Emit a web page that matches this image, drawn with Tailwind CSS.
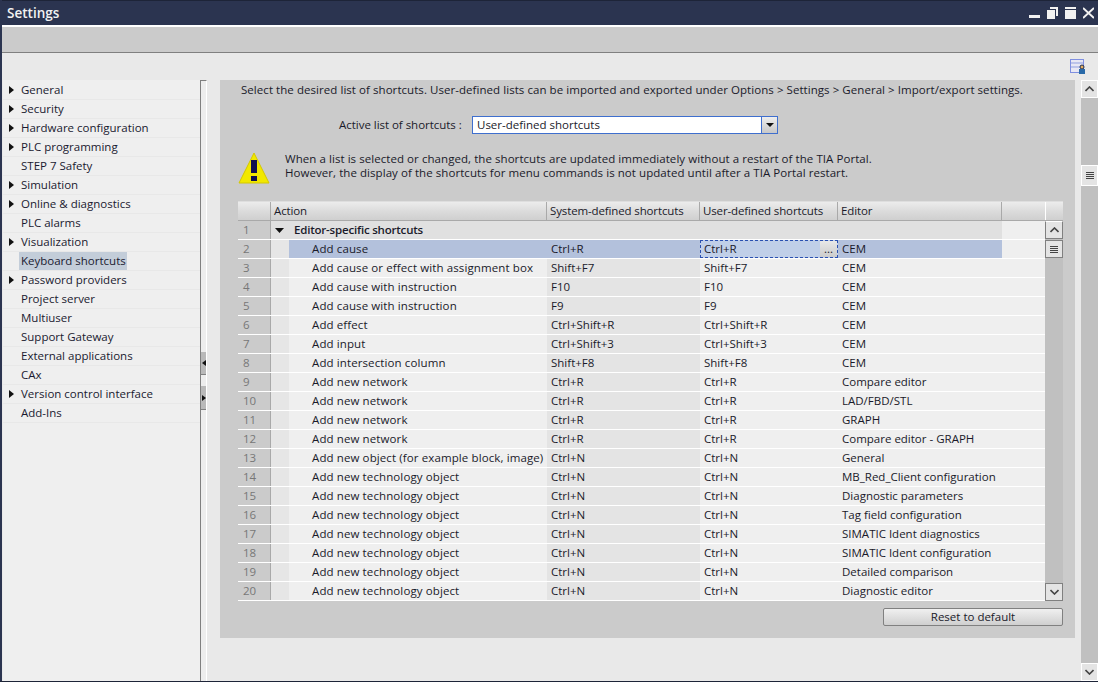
<!DOCTYPE html>
<html lang="en">
<head>
<meta charset="UTF-8">
<title>Settings</title>
<script src="https://cdn.jsdelivr.net/npm/@tailwindcss/browser@4"></script>
</head>
<body class="w-[1098px] h-[682px] overflow-hidden bg-[#e9e9e9] font-['Open_Sans',sans-serif] text-[11.5px] text-[#1a1a2a]">
<div class="h-[681px] flex flex-col border-l-2 border-[#2b3450]">
  <!-- title bar -->
  <div class="h-[25px] bg-[#2b3450] flex items-center justify-between border-t border-[#1d2438]">
    <span class="pl-[5px] text-[13.5px] font-semibold text-[#f2f2f2]">Settings</span>
    <div class="flex items-center gap-[7px] pr-[4px]">
      <svg width="11" height="12" viewBox="0 0 11 12"><rect y="8" width="11" height="3" fill="#f2f2f2"/></svg>
      <svg width="11" height="12" viewBox="0 0 11 12" fill="#f2f2f2"><path d="M0 3h8v9H0z"/><path d="M3 0h8v9H9V2H3z"/></svg>
      <svg width="11" height="12" viewBox="0 0 11 12" fill="#f2f2f2"><path d="M0 0h11v2H0zM0 3h11v9H0z"/></svg>
      <svg width="11" height="12" viewBox="0 0 11 12" stroke="#f2f2f2" stroke-width="2"><path d="M0 1l11 10M11 1L0 11"/></svg>
    </div>
  </div>
  <div class="h-[2px] bg-white"></div>
  <div class="h-[25px] bg-[#cbcbcb]"></div>
  <div class="h-[1px] bg-[#808080]"></div>
  <!-- icon strip -->
  <div class="h-[27px] flex justify-end items-center pr-[12px]">
    <svg width="16" height="16" viewBox="0 0 16 16"><rect x="0.5" y="0.5" width="13" height="13" fill="#e8e8f4" stroke="#7f8fe0"/><path d="M1 4h12M1 8h12" stroke="#8f9fe0"/><circle cx="12" cy="8" r="2" fill="#e8b060" stroke="#1a2a50"/><rect x="9" y="10" width="6" height="5" fill="#2a6aa8"/></svg>
  </div>
  <div class="flex-1 flex min-h-0">
    <!-- nav -->
    <div class="w-[197px] ml-[1px] pt-[1px] bg-[#efefef] text-[#1a1a30]">
      <div class="h-[19px] flex items-center border-b border-[#e8e8e8]"><span class="w-[18px] flex justify-end pr-[7px]"><svg width="5" height="8" viewBox="0 0 5 8"><path d="M0 0l5 4-5 4z" fill="#111"/></svg></span><span>General</span></div>
      <div class="h-[19px] flex items-center border-b border-[#e8e8e8]"><span class="w-[18px] flex justify-end pr-[7px]"><svg width="5" height="8" viewBox="0 0 5 8"><path d="M0 0l5 4-5 4z" fill="#111"/></svg></span><span>Security</span></div>
      <div class="h-[19px] flex items-center border-b border-[#e8e8e8]"><span class="w-[18px] flex justify-end pr-[7px]"><svg width="5" height="8" viewBox="0 0 5 8"><path d="M0 0l5 4-5 4z" fill="#111"/></svg></span><span>Hardware configuration</span></div>
      <div class="h-[19px] flex items-center border-b border-[#e8e8e8]"><span class="w-[18px] flex justify-end pr-[7px]"><svg width="5" height="8" viewBox="0 0 5 8"><path d="M0 0l5 4-5 4z" fill="#111"/></svg></span><span>PLC programming</span></div>
      <div class="h-[19px] flex items-center border-b border-[#e8e8e8] pl-[18px]">STEP 7 Safety</div>
      <div class="h-[19px] flex items-center border-b border-[#e8e8e8]"><span class="w-[18px] flex justify-end pr-[7px]"><svg width="5" height="8" viewBox="0 0 5 8"><path d="M0 0l5 4-5 4z" fill="#111"/></svg></span><span>Simulation</span></div>
      <div class="h-[19px] flex items-center border-b border-[#e8e8e8]"><span class="w-[18px] flex justify-end pr-[7px]"><svg width="5" height="8" viewBox="0 0 5 8"><path d="M0 0l5 4-5 4z" fill="#111"/></svg></span><span>Online &amp; diagnostics</span></div>
      <div class="h-[19px] flex items-center border-b border-[#e8e8e8] pl-[18px]">PLC alarms</div>
      <div class="h-[19px] flex items-center border-b border-[#e8e8e8]"><span class="w-[18px] flex justify-end pr-[7px]"><svg width="5" height="8" viewBox="0 0 5 8"><path d="M0 0l5 4-5 4z" fill="#111"/></svg></span><span>Visualization</span></div>
      <div class="h-[19px] flex items-center border-b border-[#e8e8e8] pl-[16px]"><span class="h-[18px] flex items-center pl-[2px] w-[108px] whitespace-nowrap bg-[#c3cdd9]">Keyboard shortcuts</span></div>
      <div class="h-[19px] flex items-center border-b border-[#e8e8e8]"><span class="w-[18px] flex justify-end pr-[7px]"><svg width="5" height="8" viewBox="0 0 5 8"><path d="M0 0l5 4-5 4z" fill="#111"/></svg></span><span>Password providers</span></div>
      <div class="h-[19px] flex items-center border-b border-[#e8e8e8] pl-[18px]">Project server</div>
      <div class="h-[19px] flex items-center border-b border-[#e8e8e8] pl-[18px]">Multiuser</div>
      <div class="h-[19px] flex items-center border-b border-[#e8e8e8] pl-[18px]">Support Gateway</div>
      <div class="h-[19px] flex items-center border-b border-[#e8e8e8] pl-[18px]">External applications</div>
      <div class="h-[19px] flex items-center border-b border-[#e8e8e8] pl-[18px]">CAx</div>
      <div class="h-[19px] flex items-center border-b border-[#e8e8e8]"><span class="w-[18px] flex justify-end pr-[7px]"><svg width="5" height="8" viewBox="0 0 5 8"><path d="M0 0l5 4-5 4z" fill="#111"/></svg></span><span>Version control interface</span></div>
      <div class="h-[19px] flex items-center border-b border-[#e8e8e8] pl-[18px]">Add-Ins</div>
    </div>
    <!-- splitter -->
    <div class="w-[7px] bg-[#ededed] border-l border-r border-t border-l-[#808080] border-t-[#808080] border-r-white flex flex-col pt-[271px]">
      <div class="h-[23px] bg-[#b9b9b9] border-b border-[#808080] flex items-center justify-center"><svg width="4" height="6" viewBox="0 0 4 6"><path d="M4 0L0 3l4 3z" fill="#111"/></svg></div>
      <div class="h-[11px]"></div>
      <div class="h-[24px] bg-[#b9b9b9] border-b border-[#808080] flex items-center justify-center"><svg width="4" height="6" viewBox="0 0 4 6"><path d="M0 0l4 3-4 3z" fill="#111"/></svg></div>
    </div>
    <!-- settings panel -->
    <div class="ml-[13px] w-[855px] h-[558px] bg-[#cbcbcb] flex flex-col pl-[18px]">
      <div class="pt-[2px] pl-[3px] h-[19px] leading-[16px] tracking-[0.055px] whitespace-nowrap">Select the desired list of shortcuts. User-defined lists can be imported and exported under Options &gt; Settings &gt; General &gt; Import/export settings.</div>
      <div class="mt-[17px] h-[18px] flex items-center">
        <span class="pl-[101px] w-[234px] tracking-[-0.03px]">Active list of shortcuts :</span>
        <div class="w-[306px] h-[18px] bg-white border border-[#3f6fce] flex items-center justify-between pl-[4px]">
          <span>User-defined shortcuts</span>
          <span class="w-[16px] h-[16px] bg-gradient-to-b from-[#eeeeee] to-[#c8c8c8] border-l border-[#3f6fce] flex items-center justify-center"><svg width="8" height="4" viewBox="0 0 8 4"><path d="M0 0h8L4 4z" fill="#111"/></svg></span>
        </div>
      </div>
      <div class="mt-[17px] flex items-start h-[39px]">
        <svg class="mt-[1px]" width="32" height="32" viewBox="0 0 32 32"><path d="M16 1L31 31H1z" fill="#f2e800" stroke="#d4c800"/><rect x="13" y="8" width="6" height="13" fill="#101050"/><rect x="13" y="24" width="6" height="5" fill="#101050"/></svg>
        <div class="ml-[15px] leading-[14px] pt-[1px] tracking-[0.06px]">When a list is selected or changed, the shortcuts are updated immediately without a restart of the TIA Portal.<br>However, the display of the shortcuts for menu commands is not updated until after a TIA Portal restart.</div>
      </div>
      <!-- table -->
      <div class="mt-[11px] w-[825px] flex flex-col">
        <div class="flex h-[20px] bg-gradient-to-b from-[#ececec] via-[#dcdcdc] to-[#cfcfcf] border-y border-[#dedede] border-b-[#a9a9a9] tracking-[-0.13px]">
          <div class="w-[33px] border-r border-[#a9a9a9]"></div>
          <div class="w-[276px] pl-[3px] border-r border-[#a9a9a9]">Action</div>
          <div class="w-[153px] pl-[3px] border-r border-[#a9a9a9]">System-defined shortcuts</div>
          <div class="w-[138px] pl-[3px] border-r border-[#a9a9a9]">User-defined shortcuts</div>
          <div class="w-[164px] pl-[3px] border-r border-[#a9a9a9]">Editor</div>
          <div class="w-[44px] border-r border-white"></div>
          <div class="flex-1"></div>
        </div>
        <div class="flex">
          <div class="w-[807px] text-[#1a1a2a] [&>div>div:nth-child(3)]:tracking-[0.11px]">
            <div class="flex h-[19px] border-b border-white"><div class="w-[33px] pl-[5px] border-r border-[#a9a9a9] text-[#777]">1</div><div class="w-[731px] bg-[#e0e0e0] font-semibold tracking-[-0.2px] flex items-center"><svg class="ml-[4px] mr-[10px]" width="9" height="5" viewBox="0 0 9 5"><path d="M0 0h9L4.5 5z" fill="#111"/></svg>Editor-specific shortcuts</div><div class="flex-1 bg-[#efefef]"></div></div>
            <div class="flex h-[19px] border-b border-white"><div class="w-[33px] pl-[5px] border-r border-[#a9a9a9] text-[#777]">2</div><div class="w-[18px] bg-[#e6e6e6]"></div><div class="w-[258px] pl-[23px] bg-[#b3c1dc]">Add cause</div><div class="w-[153px] pl-[4px] bg-[#b3c1dc]">Ctrl+R</div><div class="w-[138px] bg-[#c0cfe8] border border-dashed border-[#2a50b0] pl-[3px] flex justify-between leading-[16px]"><span>Ctrl+R</span><span class="w-[17px] bg-gradient-to-b from-[#e8e8e8] to-[#cccccc] text-center">...</span></div><div class="w-[164px] pl-[4px] bg-[#b3c1dc]">CEM</div><div class="flex-1 bg-[#efefef]"></div></div>
            <div class="flex h-[19px] border-b border-white"><div class="w-[33px] pl-[5px] border-r border-[#a9a9a9] text-[#777]">3</div><div class="w-[18px] bg-[#e6e6e6]"></div><div class="w-[258px] pl-[23px] bg-[#efefef]">Add cause or effect with assignment box</div><div class="w-[153px] pl-[4px] bg-[#e4e4e4]">Shift+F7</div><div class="w-[138px] pl-[4px] bg-[#efefef]">Shift+F7</div><div class="flex-1 pl-[4px] bg-[#efefef]">CEM</div></div>
            <div class="flex h-[19px] border-b border-white"><div class="w-[33px] pl-[5px] border-r border-[#a9a9a9] text-[#777]">4</div><div class="w-[18px] bg-[#e6e6e6]"></div><div class="w-[258px] pl-[23px] bg-[#efefef]">Add cause with instruction</div><div class="w-[153px] pl-[4px] bg-[#e4e4e4]">F10</div><div class="w-[138px] pl-[4px] bg-[#efefef]">F10</div><div class="flex-1 pl-[4px] bg-[#efefef]">CEM</div></div>
            <div class="flex h-[19px] border-b border-white"><div class="w-[33px] pl-[5px] border-r border-[#a9a9a9] text-[#777]">5</div><div class="w-[18px] bg-[#e6e6e6]"></div><div class="w-[258px] pl-[23px] bg-[#efefef]">Add cause with instruction</div><div class="w-[153px] pl-[4px] bg-[#e4e4e4]">F9</div><div class="w-[138px] pl-[4px] bg-[#efefef]">F9</div><div class="flex-1 pl-[4px] bg-[#efefef]">CEM</div></div>
            <div class="flex h-[19px] border-b border-white"><div class="w-[33px] pl-[5px] border-r border-[#a9a9a9] text-[#777]">6</div><div class="w-[18px] bg-[#e6e6e6]"></div><div class="w-[258px] pl-[23px] bg-[#efefef]">Add effect</div><div class="w-[153px] pl-[4px] bg-[#e4e4e4]">Ctrl+Shift+R</div><div class="w-[138px] pl-[4px] bg-[#efefef]">Ctrl+Shift+R</div><div class="flex-1 pl-[4px] bg-[#efefef]">CEM</div></div>
            <div class="flex h-[19px] border-b border-white"><div class="w-[33px] pl-[5px] border-r border-[#a9a9a9] text-[#777]">7</div><div class="w-[18px] bg-[#e6e6e6]"></div><div class="w-[258px] pl-[23px] bg-[#efefef]">Add input</div><div class="w-[153px] pl-[4px] bg-[#e4e4e4]">Ctrl+Shift+3</div><div class="w-[138px] pl-[4px] bg-[#efefef]">Ctrl+Shift+3</div><div class="flex-1 pl-[4px] bg-[#efefef]">CEM</div></div>
            <div class="flex h-[19px] border-b border-white"><div class="w-[33px] pl-[5px] border-r border-[#a9a9a9] text-[#777]">8</div><div class="w-[18px] bg-[#e6e6e6]"></div><div class="w-[258px] pl-[23px] bg-[#efefef]">Add intersection column</div><div class="w-[153px] pl-[4px] bg-[#e4e4e4]">Shift+F8</div><div class="w-[138px] pl-[4px] bg-[#efefef]">Shift+F8</div><div class="flex-1 pl-[4px] bg-[#efefef]">CEM</div></div>
            <div class="flex h-[19px] border-b border-white"><div class="w-[33px] pl-[5px] border-r border-[#a9a9a9] text-[#777]">9</div><div class="w-[18px] bg-[#e6e6e6]"></div><div class="w-[258px] pl-[23px] bg-[#efefef]">Add new network</div><div class="w-[153px] pl-[4px] bg-[#e4e4e4]">Ctrl+R</div><div class="w-[138px] pl-[4px] bg-[#efefef]">Ctrl+R</div><div class="flex-1 pl-[4px] bg-[#efefef]">Compare editor</div></div>
            <div class="flex h-[19px] border-b border-white"><div class="w-[33px] pl-[5px] border-r border-[#a9a9a9] text-[#777]">10</div><div class="w-[18px] bg-[#e6e6e6]"></div><div class="w-[258px] pl-[23px] bg-[#efefef]">Add new network</div><div class="w-[153px] pl-[4px] bg-[#e4e4e4]">Ctrl+R</div><div class="w-[138px] pl-[4px] bg-[#efefef]">Ctrl+R</div><div class="flex-1 pl-[4px] bg-[#efefef]">LAD/FBD/STL</div></div>
            <div class="flex h-[19px] border-b border-white"><div class="w-[33px] pl-[5px] border-r border-[#a9a9a9] text-[#777]">11</div><div class="w-[18px] bg-[#e6e6e6]"></div><div class="w-[258px] pl-[23px] bg-[#efefef]">Add new network</div><div class="w-[153px] pl-[4px] bg-[#e4e4e4]">Ctrl+R</div><div class="w-[138px] pl-[4px] bg-[#efefef]">Ctrl+R</div><div class="flex-1 pl-[4px] bg-[#efefef]">GRAPH</div></div>
            <div class="flex h-[19px] border-b border-white"><div class="w-[33px] pl-[5px] border-r border-[#a9a9a9] text-[#777]">12</div><div class="w-[18px] bg-[#e6e6e6]"></div><div class="w-[258px] pl-[23px] bg-[#efefef]">Add new network</div><div class="w-[153px] pl-[4px] bg-[#e4e4e4]">Ctrl+R</div><div class="w-[138px] pl-[4px] bg-[#efefef]">Ctrl+R</div><div class="flex-1 pl-[4px] bg-[#efefef]">Compare editor - GRAPH</div></div>
            <div class="flex h-[19px] border-b border-white"><div class="w-[33px] pl-[5px] border-r border-[#a9a9a9] text-[#777]">13</div><div class="w-[18px] bg-[#e6e6e6]"></div><div class="w-[258px] pl-[23px] bg-[#efefef] whitespace-nowrap">Add new object (for example block, image)</div><div class="w-[153px] pl-[4px] bg-[#e4e4e4]">Ctrl+N</div><div class="w-[138px] pl-[4px] bg-[#efefef]">Ctrl+N</div><div class="flex-1 pl-[4px] bg-[#efefef]">General</div></div>
            <div class="flex h-[19px] border-b border-white"><div class="w-[33px] pl-[5px] border-r border-[#a9a9a9] text-[#777]">14</div><div class="w-[18px] bg-[#e6e6e6]"></div><div class="w-[258px] pl-[23px] bg-[#efefef]">Add new technology object</div><div class="w-[153px] pl-[4px] bg-[#e4e4e4]">Ctrl+N</div><div class="w-[138px] pl-[4px] bg-[#efefef]">Ctrl+N</div><div class="flex-1 pl-[4px] bg-[#efefef]">MB_Red_Client configuration</div></div>
            <div class="flex h-[19px] border-b border-white"><div class="w-[33px] pl-[5px] border-r border-[#a9a9a9] text-[#777]">15</div><div class="w-[18px] bg-[#e6e6e6]"></div><div class="w-[258px] pl-[23px] bg-[#efefef]">Add new technology object</div><div class="w-[153px] pl-[4px] bg-[#e4e4e4]">Ctrl+N</div><div class="w-[138px] pl-[4px] bg-[#efefef]">Ctrl+N</div><div class="flex-1 pl-[4px] bg-[#efefef]">Diagnostic parameters</div></div>
            <div class="flex h-[19px] border-b border-white"><div class="w-[33px] pl-[5px] border-r border-[#a9a9a9] text-[#777]">16</div><div class="w-[18px] bg-[#e6e6e6]"></div><div class="w-[258px] pl-[23px] bg-[#efefef]">Add new technology object</div><div class="w-[153px] pl-[4px] bg-[#e4e4e4]">Ctrl+N</div><div class="w-[138px] pl-[4px] bg-[#efefef]">Ctrl+N</div><div class="flex-1 pl-[4px] bg-[#efefef]">Tag field configuration</div></div>
            <div class="flex h-[19px] border-b border-white"><div class="w-[33px] pl-[5px] border-r border-[#a9a9a9] text-[#777]">17</div><div class="w-[18px] bg-[#e6e6e6]"></div><div class="w-[258px] pl-[23px] bg-[#efefef]">Add new technology object</div><div class="w-[153px] pl-[4px] bg-[#e4e4e4]">Ctrl+N</div><div class="w-[138px] pl-[4px] bg-[#efefef]">Ctrl+N</div><div class="flex-1 pl-[4px] bg-[#efefef]">SIMATIC Ident diagnostics</div></div>
            <div class="flex h-[19px] border-b border-white"><div class="w-[33px] pl-[5px] border-r border-[#a9a9a9] text-[#777]">18</div><div class="w-[18px] bg-[#e6e6e6]"></div><div class="w-[258px] pl-[23px] bg-[#efefef]">Add new technology object</div><div class="w-[153px] pl-[4px] bg-[#e4e4e4]">Ctrl+N</div><div class="w-[138px] pl-[4px] bg-[#efefef]">Ctrl+N</div><div class="flex-1 pl-[4px] bg-[#efefef]">SIMATIC Ident configuration</div></div>
            <div class="flex h-[19px] border-b border-white"><div class="w-[33px] pl-[5px] border-r border-[#a9a9a9] text-[#777]">19</div><div class="w-[18px] bg-[#e6e6e6]"></div><div class="w-[258px] pl-[23px] bg-[#efefef]">Add new technology object</div><div class="w-[153px] pl-[4px] bg-[#e4e4e4]">Ctrl+N</div><div class="w-[138px] pl-[4px] bg-[#efefef]">Ctrl+N</div><div class="flex-1 pl-[4px] bg-[#efefef]">Detailed comparison</div></div>
            <div class="flex h-[19px] border-b border-white"><div class="w-[33px] pl-[5px] border-r border-[#a9a9a9] text-[#777]">20</div><div class="w-[18px] bg-[#e6e6e6]"></div><div class="w-[258px] pl-[23px] bg-[#efefef]">Add new technology object</div><div class="w-[153px] pl-[4px] bg-[#e4e4e4]">Ctrl+N</div><div class="w-[138px] pl-[4px] bg-[#efefef]">Ctrl+N</div><div class="flex-1 pl-[4px] bg-[#efefef]">Diagnostic editor</div></div>
          </div>
          <!-- table scrollbar -->
          <div class="w-[18px] bg-[#c0c0c0] flex flex-col">
            <div class="h-[18px] bg-[#e4e4e4] border border-[#808080] border-t-white flex items-center justify-center"><svg width="9" height="6" viewBox="0 0 9 6"><path d="M0.5 5l4-4 4 4" fill="none" stroke="#444" stroke-width="1.6"/></svg></div>
            <div class="h-[18px] mt-[1px] bg-[#e4e4e4] border border-[#808080] flex items-center justify-center"><svg width="8" height="7" viewBox="0 0 8 7"><path d="M0 .5h8M0 2.5h8M0 4.5h8M0 6.5h8" stroke="#444"/></svg></div>
            <div class="flex-1"></div>
            <div class="h-[18px] bg-[#e4e4e4] border border-[#808080] flex items-center justify-center"><svg width="9" height="6" viewBox="0 0 9 6"><path d="M0.5 1l4 4 4-4" fill="none" stroke="#444" stroke-width="1.6"/></svg></div>
          </div>
        </div>
      </div>
      <div class="mt-[7px] w-[825px] flex justify-end">
        <div class="w-[180px] h-[18px] rounded-[2px] border border-[#808080] bg-gradient-to-b from-[#f0f0f0] to-[#cfcfcf] flex items-center justify-center">Reset to default</div>
      </div>
    </div>
    <!-- page scrollbar -->
    <div class="ml-[6px] w-[17px] h-[601px] bg-[#c0c0c0] flex flex-col">
      <div class="h-[18px] bg-[#e4e4e4] border border-white flex items-center justify-center"><svg width="9" height="6" viewBox="0 0 9 6"><path d="M0.5 5l4-4 4 4" fill="none" stroke="#444" stroke-width="1.6"/></svg></div>
      <div class="h-[67px]"></div>
      <div class="h-[21px] bg-[#e4e4e4] border border-white flex items-center justify-center"><svg width="8" height="7" viewBox="0 0 8 7"><path d="M0 .5h8M0 2.5h8M0 4.5h8M0 6.5h8" stroke="#444"/></svg></div>
      <div class="flex-1"></div>
      <div class="h-[18px] bg-[#e4e4e4] border border-white flex items-center justify-center"><svg width="9" height="6" viewBox="0 0 9 6"><path d="M0.5 1l4 4 4-4" fill="none" stroke="#444" stroke-width="1.6"/></svg></div>
    </div>
  </div>
</div>
<div class="h-[1px] bg-[#1d2438]"></div>
</body>
</html>
